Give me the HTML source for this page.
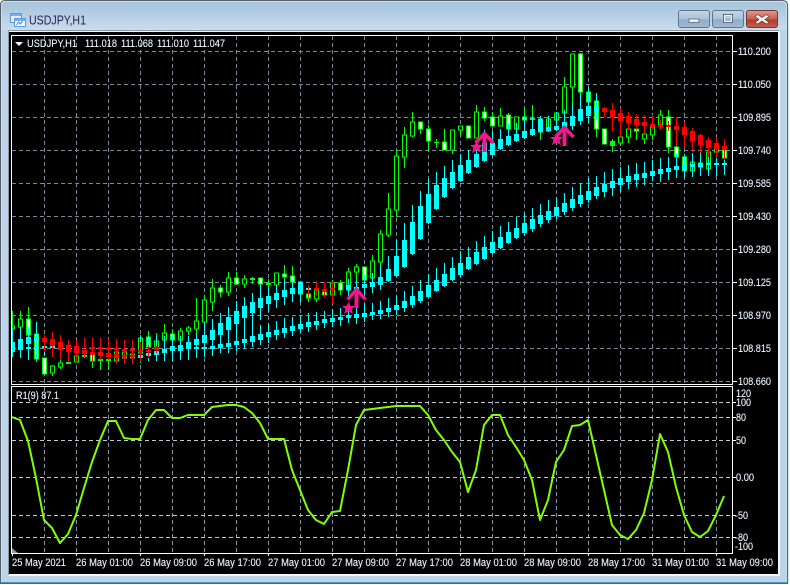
<!DOCTYPE html>
<html><head><meta charset="utf-8"><title>USDJPY,H1</title>
<style>
html,body{margin:0;padding:0;background:#fff;width:790px;height:585px;overflow:hidden}
svg{display:block}
text{font-family:"Liberation Sans",sans-serif;font-size:10.6px;fill:#f4faff;stroke:#cfe6ff;stroke-width:.12px}
</style></head><body>
<svg width="790" height="585" viewBox="0 0 790 585" xmlns="http://www.w3.org/2000/svg">
<defs>
<linearGradient id="tb" x1="0" y1="0" x2="0" y2="1"><stop offset="0" stop-color="#a5c3da"/><stop offset="1" stop-color="#c9dcec"/></linearGradient>
<linearGradient id="btn" x1="0" y1="0" x2="0" y2="1"><stop offset="0" stop-color="#c3d6e7"/><stop offset=".5" stop-color="#a9c2d9"/><stop offset=".55" stop-color="#8fabc6"/><stop offset="1" stop-color="#a3bdd5"/></linearGradient>
<linearGradient id="cls" x1="0" y1="0" x2="0" y2="1"><stop offset="0" stop-color="#dc9a90"/><stop offset=".5" stop-color="#c9604f"/><stop offset=".55" stop-color="#b53a2a"/><stop offset="1" stop-color="#c9604f"/></linearGradient>
<clipPath id="c"><rect x="12" y="36" width="720" height="348"/></clipPath>
<clipPath id="s"><rect x="12" y="387" width="720" height="166"/></clipPath>
</defs>
<path d="M0 585V5Q0 1 5 1H782Q787 1 787 5V584H0Z" fill="#bcd3ea"/>
<path d="M1 30V6Q1 2 6 2H782Q786 2 786 6V30Z" fill="url(#tb)"/>
<path d="M0.5 584V5Q0.5 .5 5 .5H782Q787.5 .5 787.5 5V583.5H0.5" fill="none" stroke="#55606c"/>
<path d="M787.5 8V583H0.5" fill="none" stroke="#1f7f9e" stroke-width="1.4"/>
<path d="M1.5 582V6Q1.5 1.5 6 1.5H782Q786.5 1.5 786.5 6V582" fill="none" stroke="#d6e4f0" stroke-opacity=".7"/>
<rect x="8" y="31" width="772" height="545" fill="#f2f6fa"/>
<rect x="8" y="30" width="771" height="1" fill="#8a98a6"/>
<rect x="8" y="31" width="1" height="544" fill="#8a98a6"/>
<rect x="9" y="32" width="769" height="542" fill="#000"/>

<!-- title icon -->
<rect x="10.5" y="13.5" width="11" height="9" fill="#e6f0fb" stroke="#5c9be0"/><rect x="11" y="14" width="10" height="2" fill="#78aeea"/>
<rect x="14.5" y="18.5" width="11" height="8" fill="#f4f9ff" stroke="#5c9be0"/><rect x="15" y="19" width="10" height="2" fill="#78aeea"/>
<path d="M16.500 25l2-3 2 2 2-3" fill="none" stroke="#4a86cf"/>
<text x="29" y="24.500" textLength="57" lengthAdjust="spacingAndGlyphs" style="font-size:12.500px;fill:#2b1f52;stroke:none">USDJPY,H1</text>

<!-- buttons -->
<rect x="678.500" y="10.500" width="31" height="17" rx="2.500" fill="url(#btn)" stroke="#5f7589"/>
<rect x="689" y="19" width="10" height="3.500" fill="#eef2f6" stroke="#5a6a7a" stroke-width=".8"/>
<rect x="712.500" y="10.500" width="31" height="17" rx="2.500" fill="url(#btn)" stroke="#5f7589"/>
<rect x="723.500" y="14.500" width="9" height="8" fill="none" stroke="#3f4e5e" stroke-width="1"/><rect x="724.500" y="15.500" width="7" height="6" fill="none" stroke="#eef2f6" stroke-width="1.400"/>
<rect x="746.500" y="10.500" width="31" height="17" rx="2.500" fill="url(#cls)" stroke="#6e3a35"/>
<path d="M757.500 14.500l4.500 3 4.500-3 2.500 2-4 3 4 3-2.500 1.500-4.500-3-4.500 3-2.500-1.500 4-3-4-3z" fill="#f2f2f2" stroke="#5f3b38" stroke-width=".7"/>

<!-- grid -->
<g stroke="#778899" stroke-dasharray="4 3" fill="none">
<path d="M12 51.500H732M12 84.500H732M12 117.500H732M12 150.500H732M12 183.500H732M12 216.500H732M12 249.500H732M12 282.500H732M12 315.500H732M12 348.500H732M12 381.500H732"/>
<path d="M44.500 36V384M76.500 36V384M108.500 36V384M140.500 36V384M172.500 36V384M204.500 36V384M236.500 36V384M268.500 36V384M300.500 36V384M332.500 36V384M364.500 36V384M396.500 36V384M428.500 36V384M460.500 36V384M492.500 36V384M524.500 36V384M556.500 36V384M588.500 36V384M620.500 36V384M652.500 36V384M684.500 36V384M716.500 36V384"/>
<path d="M44.500 387V553M76.500 387V553M108.500 387V553M140.500 387V553M172.500 387V553M204.500 387V553M236.500 387V553M268.500 387V553M300.500 387V553M332.500 387V553M364.500 387V553M396.500 387V553M428.500 387V553M460.500 387V553M492.500 387V553M524.500 387V553M556.500 387V553M588.500 387V553M620.500 387V553M652.500 387V553M684.500 387V553M716.500 387V553" stroke="#8c9aa8"/>
<path d="M12 402.500H732M12 417.500H732M12 440.500H732M12 477.500H732M12 515.500H732M12 537.500H732" stroke="#c4c8cc"/>
</g>

<g clip-path="url(#c)">
<!-- green wicks -->
<path fill="none" stroke="#00ff00" d="M12.500 311V330M20.500 311V337M28.500 307V340M36.500 322V362M52.500 365V376M60.500 360V369M76.500 356V362M84.500 353V358M92.500 350V368M100.500 352V370M108.500 352V370M116.500 350V364M124.500 350V362M132.500 352V361M140.500 335V363M148.500 331V360M156.500 333V350M164.500 324V347M172.500 329V345M180.500 328V345M188.500 326V335M196.500 298V335M204.500 295V330M212.500 279V311M220.500 285V297M228.500 272V296M236.500 272V285M244.500 275V288M252.500 277V284M260.500 278V298M268.500 279V290M276.500 273V285M284.500 265V283M292.500 266V282M300.500 282V302M308.500 294V302M316.500 290V302M324.500 290V295M332.500 280V303M340.500 280V295M348.500 268V300M356.500 264V290M364.500 267V280M372.500 255V282M380.500 230V270M388.500 193V237M396.500 150V217M404.500 127V168M412.500 112V137M420.500 122V134M428.500 125V152M436.500 139V148M444.500 129V150M452.500 130V154M460.500 126V135M468.500 126V138M476.500 105V138M484.500 107V121M492.500 112V126M500.500 108V126M508.500 113V129M516.500 117V129M524.500 107V125M532.500 105V129M540.500 119V140M548.500 116V131M556.500 112V120M564.500 77V113M572.500 54V117M580.500 53V109M588.500 87V102M596.500 97V137M604.500 129V144M612.500 139V152M620.500 137V146M628.500 129V143M636.500 129V140M644.500 134V144M652.500 127V140M660.500 110V130M668.500 110V153M676.500 142V157M684.500 157V171M692.500 162V171M700.500 163V167M708.500 152V169M716.500 148V155M724.500 150V158"/>
<!-- hollow bodies -->
<path fill="#000" stroke="#00ff00" d="M10.500 326H14.500V329H10.500ZM18.500 319H22.500V327H18.500ZM50.500 366H54.500V373H50.500ZM58.500 363H62.500V367H58.500ZM74.500 356H78.500V362H74.500ZM114.500 352H118.500V361H114.500ZM122.500 352H126.500V358H122.500ZM130.500 354H134.500V358H130.500ZM138.500 338H142.500V353H138.500ZM154.500 341H158.500V347H154.500ZM162.500 333H166.500V340H162.500ZM178.500 331H182.500V340H178.500ZM186.500 328H190.500V331H186.500ZM194.500 321H198.500V329H194.500ZM202.500 300H206.500V322H202.500ZM210.500 288H214.500V302H210.500ZM226.500 278H230.500V292H226.500ZM242.500 279H246.500V284H242.500ZM274.500 273H278.500V285H274.500ZM314.500 290H318.500V299H314.500ZM330.500 283H334.500V295H330.500ZM346.500 272H350.500V290H346.500ZM354.500 267H358.500V272H354.500ZM370.500 261H374.500V278H370.500ZM378.500 234H382.500V262H378.500ZM386.500 209H390.500V235H386.500ZM394.500 156H398.500V210H394.500ZM402.500 135H406.500V157H402.500ZM410.500 122H414.500V136H410.500ZM450.500 130H454.500V150H450.500ZM458.500 126H462.500V130H458.500ZM474.500 112H478.500V138H474.500ZM498.500 116H502.500V126H498.500ZM514.500 117H518.500V129H514.500ZM546.500 119H550.500V131H546.500ZM554.500 113H558.500V120H554.500ZM562.500 87H566.500V113H562.500ZM570.500 54H574.500V87H570.500ZM618.500 137H622.500V143H618.500ZM626.500 129H630.500V137H626.500ZM642.500 134H646.500V139H642.500ZM650.500 127H654.500V135H650.500ZM658.500 115H662.500V125H658.500ZM690.500 162H694.500V171H690.500ZM706.500 152H710.500V169H706.500ZM714.500 148H718.500V152H714.500Z"/>
<!-- white bodies -->
<path fill="#fff" stroke="#00ff00" d="M26.500 319H30.500V335H26.500ZM34.500 334H38.500V359H34.500ZM42.500 358H46.500V374H42.500ZM90.500 354H94.500V361H90.500ZM146.500 337H150.500V347H146.500ZM170.500 334H174.500V340H170.500ZM218.500 288H222.500V292H218.500ZM234.500 278H238.500V284H234.500ZM258.500 278H262.500V284H258.500ZM282.500 274H286.500V277H282.500ZM290.500 276H294.500V282H290.500ZM298.500 282H302.500V294H298.500ZM306.500 294H310.500V298H306.500ZM322.500 290H326.500V295H322.500ZM338.500 283H342.500V290H338.500ZM362.500 267H366.500V280H362.500ZM418.500 122H422.500V129H418.500ZM426.500 129H430.500V141H426.500ZM442.500 142H446.500V150H442.500ZM466.500 126H470.500V138H466.500ZM482.500 112H486.500V118H482.500ZM490.500 117H494.500V126H490.500ZM506.500 115H510.500V129H506.500ZM522.500 117H526.500V120H522.500ZM538.500 119H542.500V132H538.500ZM578.500 54H582.500V92H578.500ZM586.500 92H590.500V102H586.500ZM594.500 101H598.500V129H594.500ZM602.500 129H606.500V144H602.500ZM634.500 129H638.500V131H634.500ZM666.500 117H670.500V147H666.500ZM674.500 147H678.500V157H674.500ZM682.500 157H686.500V171H682.500ZM698.500 163H702.500V167H698.500ZM722.500 150H726.500V158H722.500Z"/>
<!-- small green filled -->
<path fill="none" stroke="#00ff00" stroke-width="5" d="M68.500 362V364M84.500 355V357M100.500 359V361M108.500 359V361M252.500 278V280M268.500 283V285M436.500 142V143M532.500 118V120M610 143.500H615"/>

<!-- cyan wicks slow -->
<path fill="none" stroke="#00ffff" d="M28.500 335V360M36.500 335V360M44.500 338V356M52.500 338V356M60.500 338V356M140.500 336V361M148.500 336V361M156.500 336V361M164.500 336V361M172.500 336V361M180.500 336V360M188.500 336V360M196.500 336V358M204.500 336V357M212.500 338V356M220.500 333V353M228.500 333V353M236.500 330V351M244.500 329V349M252.500 327V347M260.500 325V345M268.500 323V343M276.500 321V340M284.500 318V338M292.500 317V336M300.500 315V333M308.500 313V332M316.500 312V330M324.500 311V328M332.500 309V327M340.500 308V326M348.500 307V323M356.500 306V324M364.500 303V322M372.500 303V320M380.500 301V319M388.500 298V317M396.500 295V315M404.500 291V312M412.500 286V308M420.500 280V303M428.500 274V298M436.500 268V292M444.500 263V287M452.500 257V281M460.500 251V277M468.500 247V270M476.500 241V265M484.500 236V260M492.500 231V254M500.500 226V249M508.500 222V244M516.500 217V239M524.500 213V235M532.500 208V232M540.500 204V227M548.500 200V223M556.500 197V219M564.500 193V215M572.500 187V211M580.500 183V207M588.500 178V203M596.500 176V199M604.500 172V197M612.500 169V196M620.500 167V192M628.500 165V189M636.500 163V187M644.500 162V185M652.500 160V181M660.500 158V182M668.500 157V180M676.500 154V178M684.500 154V178M692.500 153V177M700.500 153V176M708.500 153V176M716.500 153V176M724.500 153V175"/>
<!-- cyan wicks fast -->
<path fill="none" stroke="#00ffff" d="M12.500 327V357M20.500 327V358M28.500 327V358M36.500 322V358M140.500 350V360M148.500 345V361M156.500 343V360M164.500 342V357M172.500 340V356M180.500 336V356M188.500 336V357M196.500 333V355M204.500 322V357M212.500 319V356M220.500 313V352M228.500 307V347M236.500 301V340M244.500 297V335M252.500 293V328M260.500 285V320M268.500 287V312M276.500 285V308M284.500 280V305M292.500 280V302M300.500 281V302M308.500 286V292M348.500 279V296M356.500 280V296M364.500 275V295M372.500 273V293M380.500 266V290M388.500 256V282M396.500 240V277M404.500 223V268M412.500 205V255M420.500 191V240M428.500 179V224M436.500 172V210M444.500 166V198M452.500 160V189M460.500 154V182M468.500 150V174M476.500 150V168M484.500 130V162M492.500 131V156M500.500 129V150M508.500 123V146M516.500 123V142M524.500 116V139M532.500 116V136M540.500 116V133M548.500 116V132M556.500 112V131M564.500 110V129M572.500 103V130M580.500 93V125M588.500 87V123M596.500 93V120"/>
<!-- cyan bodies -->
<path fill="none" stroke="#00ffff" stroke-width="5" d="M12.500 342V352M20.500 339V350M28.500 337V344M36.500 337V341M28.500 347V349M36.500 347V349M44.500 346V348M52.500 346V348M60.500 347V349M140.500 355V358M148.500 353V356M156.500 351V355M164.500 349V353M172.500 346V351M180.500 345V351M188.500 342V347M196.500 339V345M188.500 347V349M196.500 347V349M204.500 347V349M204.500 335V343M212.500 330V340M212.500 346V349M220.500 323V335M220.500 344V348M228.500 317V330M228.500 343V347M236.500 311V324M236.500 341V345M244.500 306V318M244.500 339V343M252.500 302V313M252.500 336V342M260.500 298V308M260.500 334V340M268.500 296V304M268.500 332V337M276.500 293V300M276.500 330V335M284.500 290V297M284.500 328V333M292.500 288V294M292.500 326V331M300.500 282V294M300.500 324V329M308.500 288V290M308.500 322V327M316.500 321V325M324.500 319V323M332.500 318V322M340.500 317V320M348.500 315V318M356.500 314V318M364.500 313V317M372.500 312V315M380.500 310V314M388.500 308V312M396.500 305V310M404.500 301V308M412.500 296V305M420.500 291V301M428.500 285V297M436.500 280V291M444.500 274V286M452.500 268V280M460.500 263V275M468.500 257V269M476.500 252V264M484.500 247V259M492.500 242V253M500.500 237V248M508.500 232V243M516.500 228V238M524.500 223V233M532.500 219V229M540.500 215V224M548.500 211V220M556.500 207V216M564.500 203V212M572.500 199V208M580.500 195V204M588.500 191V200M596.500 187V196M604.500 184V192M612.500 181V188M620.500 178V185M628.500 176V182M636.500 174V180M644.500 173V178M652.500 171V176M660.500 169V174M668.500 168V172M676.500 166V170M684.500 165V169M692.500 164V167M700.500 164V167M708.500 163V165M716.500 163V165M724.500 163V165M348.500 285V290M356.500 287V290M364.500 284V288M372.500 282V287M380.500 277V285M388.500 269V281M396.500 256V276M404.500 240V267M412.500 222V254M420.500 206V239M428.500 194V223M436.500 185V209M444.500 178V197M452.500 172V188M460.500 165V181M468.500 160V173M476.500 154V167M484.500 143V161M492.500 143V155M500.500 139V149M508.500 136V145M516.500 134V141M524.500 131V138M532.500 129V135M540.500 120V132M548.500 127V131M556.500 126V130M564.500 122V128M572.500 116V126M580.500 109V121M588.500 106V116M596.500 107V111"/>

<!-- red wicks -->
<path fill="none" stroke="#ff0000" d="M44.500 335V352M52.500 332V357M60.500 335V360M68.500 340V362M76.500 340V362M84.500 338V357M92.500 338V362M100.500 338V360M108.500 339V360M116.500 339V364M124.500 340V364M132.500 340V364M140.500 342V362M148.500 345V358M156.500 346V353M308.500 285V298M316.500 281V296M324.500 282V298M332.500 282V303M604.500 107V117M612.500 103V131M620.500 108V137M628.500 112V130M636.500 114V130M644.500 115V134M652.500 115V130M660.500 120V130M668.500 121V131M676.500 117V146M684.500 122V148M692.500 128V152M700.500 134V153M708.500 137V157M716.500 137V158M724.500 139V160"/>
<!-- red bodies -->
<path fill="none" stroke="#ff0000" stroke-width="5" d="M44.500 338V342M52.500 339V346M60.500 342V350M68.500 345V352M76.500 346V353M84.500 350V354M92.500 352V355M100.500 352V356M108.500 353V357M116.500 354V358M124.500 355V357M132.500 355V357M92.500 347V349M100.500 347V349M108.500 348V350M116.500 348V350M124.500 349V351M132.500 349V351M140.500 350V352M148.500 350V352M156.500 348V350M316.500 288V290M324.500 290V292M332.500 288V290M604.500 108V112M612.500 110V117M620.500 113V121M628.500 116V123M636.500 119V125M644.500 122V126M652.500 124V127M660.500 125V127M668.500 125V127M676.500 126V130M684.500 127V135M692.500 131V141M700.500 135V145M708.500 140V148M716.500 143V149M724.500 146V150"/>

<!-- arrows and stars -->
<g fill="none" stroke="#f5158e" stroke-linejoin="miter">
<path d="M356.500 291V308" stroke-width="4"/><path d="M347.500 299.500L356.500 289.500L365.500 299.500" stroke-width="3.500"/>
<path d="M484.500 135V152" stroke-width="4"/><path d="M475.500 143L484.500 133.500L493.500 143" stroke-width="3.500"/>
<path d="M564.500 129V146" stroke-width="4"/><path d="M555.500 137L564.500 127.500L573.500 137" stroke-width="3.500"/>
</g>
<g fill="#f5158e">
<polygon points="348.500,302 350.500,306 355,306 351.500,309 353,314 348.500,311.200 344,314 345.500,309 342,306 346.500,306"/>
<polygon points="476.500,141 478.500,145 483,145 479.500,148 481,153 476.500,150.200 472,153 473.500,148 470,145 474.500,145"/>
<polygon points="556.500,133 558.500,137 563,137 559.500,140 561,145 556.500,142.200 552,145 553.500,140 550,137 554.500,137"/>
</g>
</g>

<!-- indicator -->
<g clip-path="url(#s)">
<polyline fill="none" stroke="#7fff00" stroke-width="2" stroke-linejoin="round" points="12,417 20,420 28,441 36,478 44,520 52,528 60,543 68,534 76,515 84,488 92,462 100,440 108,421 116,421 124,438 132,439 140,439 148,420 156,410 164,410 172,418 180,418 188,415 196,415 204,415 212,407 220,406 228,405 236,405 244,407 252,413 260,423 268,439 276,439 284,439 292,470 300,490 308,510 316,520 324,524 332,512 340,511 348,470 356,425 364,410 372,409 380,408 388,407 396,406 404,406 412,406 420,406 428,415 436,430 444,440 452,452 460,462 468,492 476,470 484,425 492,415 500,415 508,435 516,447 524,460 532,480 540,520 548,500 556,462 564,450 572,426 580,425 588,420 596,455 604,490 612,525 620,535 628,539 636,530 644,513 652,480 660,434 668,452 676,487 684,515 692,532 700,537 708,531 716,515 724,496"/>
</g>
<polygon points="12,548 18,553 12,553" fill="#8a98a6"/>

<!-- frames -->
<g fill="none" stroke="#fff">
<rect x="11.500" y="35.500" width="721" height="349"/>
<rect x="11.500" y="386.500" width="721" height="167"/>
<path d="M733 51.500h4M733 84.500h4M733 117.500h4M733 150.500h4M733 183.500h4M733 216.500h4M733 249.500h4M733 282.500h4M733 315.500h4M733 348.500h4M733 381.500h4"/>
<path d="M733 402.500h3M733 417.500h3M733 440.500h3M733 477.500h3M733 515.500h3M733 537.500h3"/>
<path d="M12.500 553v3M76.500 553v3M140.500 553v3M204.500 553v3M268.500 553v3M332.500 553v3M396.500 553v3M460.500 553v3M524.500 553v3M588.500 553v3M652.500 553v3M716.500 553v3"/>
</g>

<!-- legend -->
<polygon points="15,42 23,42 19,46" fill="#fff"/>
<text x="27" y="47" textLength="50" lengthAdjust="spacingAndGlyphs">USDJPY,H1</text>
<text x="85" y="47" textLength="32" lengthAdjust="spacingAndGlyphs">111.018</text>
<text x="121" y="47" textLength="32" lengthAdjust="spacingAndGlyphs">111.068</text>
<text x="157" y="47" textLength="32" lengthAdjust="spacingAndGlyphs">111.010</text>
<text x="193" y="47" textLength="32" lengthAdjust="spacingAndGlyphs">111.047</text>
<text x="16" y="399" textLength="43" lengthAdjust="spacingAndGlyphs">R1(9) 87.1</text>

<!-- price axis -->
<g>
<text x="738" y="55" textLength="33" lengthAdjust="spacingAndGlyphs">110.200</text>
<text x="738" y="88" textLength="33" lengthAdjust="spacingAndGlyphs">110.050</text>
<text x="738" y="121" textLength="33" lengthAdjust="spacingAndGlyphs">109.895</text>
<text x="738" y="154" textLength="33" lengthAdjust="spacingAndGlyphs">109.740</text>
<text x="738" y="187" textLength="33" lengthAdjust="spacingAndGlyphs">109.585</text>
<text x="738" y="220" textLength="33" lengthAdjust="spacingAndGlyphs">109.430</text>
<text x="738" y="253" textLength="33" lengthAdjust="spacingAndGlyphs">109.280</text>
<text x="738" y="286" textLength="33" lengthAdjust="spacingAndGlyphs">109.125</text>
<text x="738" y="319" textLength="33" lengthAdjust="spacingAndGlyphs">108.970</text>
<text x="738" y="352" textLength="33" lengthAdjust="spacingAndGlyphs">108.815</text>
<text x="738" y="385" textLength="33" lengthAdjust="spacingAndGlyphs">108.660</text>
<text x="736" y="397" textLength="15" lengthAdjust="spacingAndGlyphs">120</text>
<text x="736" y="406" textLength="15" lengthAdjust="spacingAndGlyphs">100</text>
<text x="736" y="421" textLength="10" lengthAdjust="spacingAndGlyphs">80</text>
<text x="736" y="444" textLength="10" lengthAdjust="spacingAndGlyphs">50</text>
<text x="736" y="481" textLength="18" lengthAdjust="spacingAndGlyphs">0.00</text>
<text x="735" y="519" textLength="13" lengthAdjust="spacingAndGlyphs">-50</text>
<text x="735" y="541" textLength="13" lengthAdjust="spacingAndGlyphs">-80</text>
<text x="735" y="550" textLength="18" lengthAdjust="spacingAndGlyphs">-100</text>
</g>

<!-- time axis -->
<g>
<text x="12" y="566" textLength="54" lengthAdjust="spacingAndGlyphs">25 May 2021</text>
<text x="76" y="566" textLength="57" lengthAdjust="spacingAndGlyphs">26 May 01:00</text>
<text x="140" y="566" textLength="57" lengthAdjust="spacingAndGlyphs">26 May 09:00</text>
<text x="204" y="566" textLength="57" lengthAdjust="spacingAndGlyphs">26 May 17:00</text>
<text x="268" y="566" textLength="57" lengthAdjust="spacingAndGlyphs">27 May 01:00</text>
<text x="332" y="566" textLength="57" lengthAdjust="spacingAndGlyphs">27 May 09:00</text>
<text x="396" y="566" textLength="57" lengthAdjust="spacingAndGlyphs">27 May 17:00</text>
<text x="460" y="566" textLength="57" lengthAdjust="spacingAndGlyphs">28 May 01:00</text>
<text x="524" y="566" textLength="57" lengthAdjust="spacingAndGlyphs">28 May 09:00</text>
<text x="588" y="566" textLength="57" lengthAdjust="spacingAndGlyphs">28 May 17:00</text>
<text x="652" y="566" textLength="57" lengthAdjust="spacingAndGlyphs">31 May 01:00</text>
<text x="716" y="566" textLength="57" lengthAdjust="spacingAndGlyphs">31 May 09:00</text>
</g>
</svg>
</body></html>
